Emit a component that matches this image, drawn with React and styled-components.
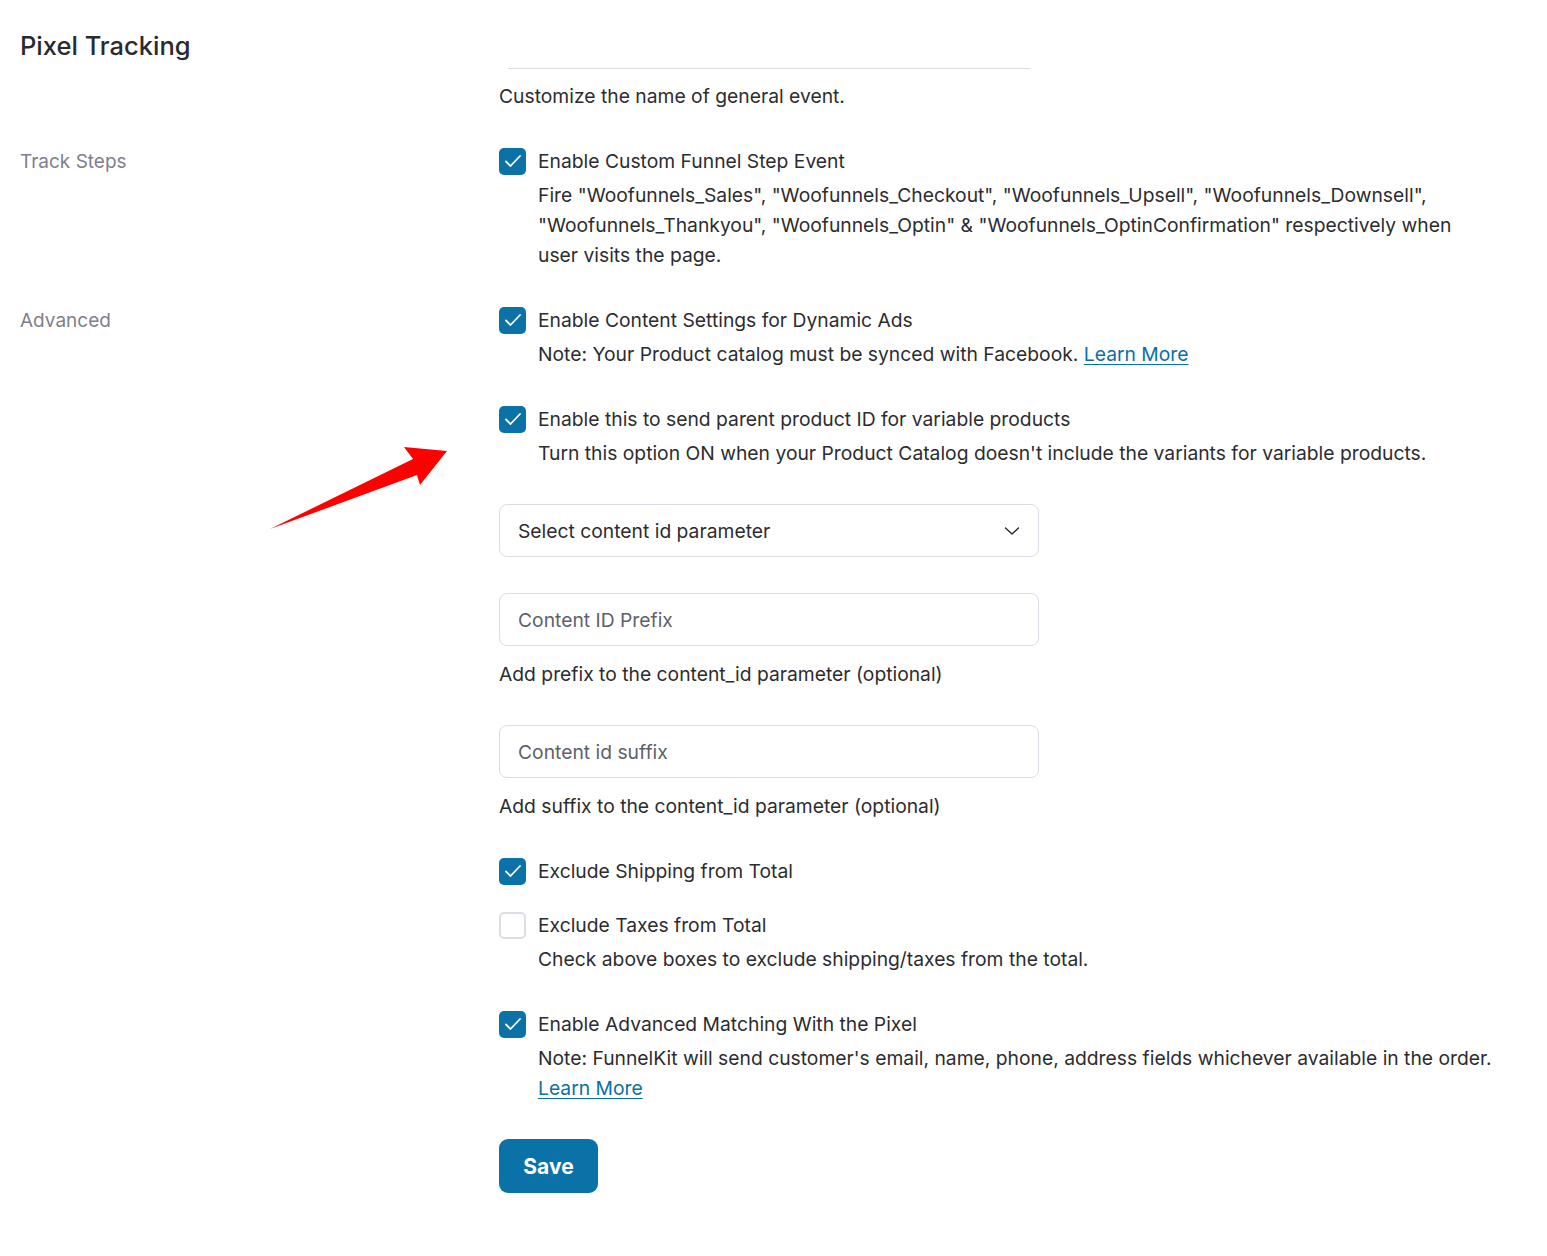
import React from 'react'
import styled, { createGlobalStyle } from 'styled-components'

const GlobalStyle = createGlobalStyle`
  body {
    margin: 0;
    background: #ffffff;
    font-family: Inter, "Noto Sans", "Liberation Sans", sans-serif;
    color: #2c2c30;
  }
`

const Page = styled.div`
  position: relative;
  width: 1547px;
  min-height: 1256px;
  padding: 0 0 60px 20px;
  box-sizing: border-box;
`

const Section = styled.div`
  display: grid;
  grid-template-columns: 479px 1fr;
  margin-bottom: 36px;
`

const Title = styled.h1`
  margin: 30px 0 0;
  font-size: 25.5px;
  line-height: 32px;
  font-weight: 500;
  color: #2a2a2e;
`

const Label = styled.div`
  font-size: 19px;
  line-height: 28px;
  padding-top: 1px;
  color: #80808c;
`

const Content = styled.div`
  display: flex;
  flex-direction: column;
  gap: ${p => p.$gap ?? 36}px;
`

const Rule = styled.div`
  width: 522px;
  height: 1px;
  margin: 68px 0 0 9px;
  background: #dcdce0;
`

const Help = styled.div`
  font-size: 19.3px;
  line-height: 30px;
  margin-top: ${p => p.$mt || 0}px;
`

const Group = styled.div`
  display: flex;
  flex-direction: column;
`

const OptionRow = styled.label`
  display: flex;
  align-items: center;
  gap: 12px;
  height: 28px;
  font-size: 19.3px;
  line-height: 28px;
`

const Box = styled.span`
  width: 27px;
  height: 27px;
  box-sizing: border-box;
  border-radius: 5px;
  flex-shrink: 0;
  display: flex;
  align-items: center;
  justify-content: center;
  background: ${p => (p.$checked ? '#0b72a8' : '#ffffff')};
  border: ${p => (p.$checked ? 'none' : '2px solid #dddde8')};
`

const Desc = styled.div`
  margin: 5px 0 0 39px;
  font-size: 19.3px;
  line-height: 30px;
  max-width: 1000px;
`

const Link = styled.a`
  color: #0a6fa8;
  text-decoration: underline;
  text-underline-offset: 3px;
`

const Field = styled.div`
  width: 540px;
  height: 53px;
  box-sizing: border-box;
  border: 1px solid #dcdce6;
  border-radius: 8px;
  padding: 0 18px;
  display: flex;
  align-items: center;
  justify-content: space-between;
  font-size: 19.3px;
  color: ${p => (p.$placeholder ? '#5f5f6b' : '#2c2c30')};
`

const SaveButton = styled.button`
  width: 99px;
  height: 54px;
  border: none;
  border-radius: 9px;
  background: #0b72a8;
  color: #ffffff;
  font-family: inherit;
  font-size: 21px;
  font-weight: 700;
  cursor: pointer;
`

const Arrow = styled.svg`
  position: absolute;
  left: 0;
  top: 0;
  pointer-events: none;
`

const Check = () => (
  <svg width="18" height="14" viewBox="0 0 18 14">
    <path d="M2 7.5 L6.5 12 L16 2" fill="none" stroke="#fff" strokeWidth="1.8" strokeLinecap="round" strokeLinejoin="round" />
  </svg>
)

const Option = ({ checked, children }) => (
  <OptionRow>
    <Box $checked={checked}>{checked && <Check />}</Box>
    {children}
  </OptionRow>
)

const Chevron = () => (
  <svg width="16" height="10" viewBox="0 0 16 10">
    <path d="M1.5 2 L8 8 L14.5 2" fill="none" stroke="#2c2c30" strokeWidth="1.4" strokeLinecap="round" strokeLinejoin="round" />
  </svg>
)

export default function App() {
  return (
    <>
      <GlobalStyle />
      <Page>
        <Section>
          <Title>Pixel Tracking</Title>
          <Content $gap={0}>
            <Rule />
            <Help $mt={12}>Customize the name of general event.</Help>
          </Content>
        </Section>

        <Section>
          <Label>Track Steps</Label>
          <Group>
            <Option checked>Enable Custom Funnel Step Event</Option>
            <Desc>
              Fire "Woofunnels_Sales", "Woofunnels_Checkout", "Woofunnels_Upsell", "Woofunnels_Downsell",
              <br />
              "Woofunnels_Thankyou", "Woofunnels_Optin" &amp; "Woofunnels_OptinConfirmation" respectively when
              <br />
              user visits the page.
            </Desc>
          </Group>
        </Section>

        <Section>
          <Label>Advanced</Label>
          <Content>
            <Group>
              <Option checked>Enable Content Settings for Dynamic Ads</Option>
              <Desc>
                Note: Your Product catalog must be synced with Facebook. <Link href="#">Learn More</Link>
              </Desc>
            </Group>

            <Group>
              <Option checked>Enable this to send parent product ID for variable products</Option>
              <Desc>Turn this option ON when your Product Catalog doesn't include the variants for variable products.</Desc>
            </Group>

            <Field>
              Select content id parameter
              <Chevron />
            </Field>

            <Group>
              <Field $placeholder>Content ID Prefix</Field>
              <Help $mt={13}>Add prefix to the content_id parameter (optional)</Help>
            </Group>

            <Group>
              <Field $placeholder>Content id suffix</Field>
              <Help $mt={13}>Add suffix to the content_id parameter (optional)</Help>
            </Group>

            <Content $gap={26}>
              <Option checked>Exclude Shipping from Total</Option>
              <Group>
                <Option>Exclude Taxes from Total</Option>
                <Desc>Check above boxes to exclude shipping/taxes from the total.</Desc>
              </Group>
            </Content>

            <Group>
              <Option checked>Enable Advanced Matching With the Pixel</Option>
              <Desc>
                Note: FunnelKit will send customer's email, name, phone, address fields whichever available in the order.
                <br />
                <Link href="#">Learn More</Link>
              </Desc>
            </Group>

            <div>
              <SaveButton>Save</SaveButton>
            </div>
          </Content>
        </Section>

        <Arrow width="1547" height="1256" viewBox="0 0 1547 1256">
          <polygon points="270,529 413,459 404,447 447,451 420,485 417,475" fill="#ff0000" />
        </Arrow>
      </Page>
    </>
  )
}
